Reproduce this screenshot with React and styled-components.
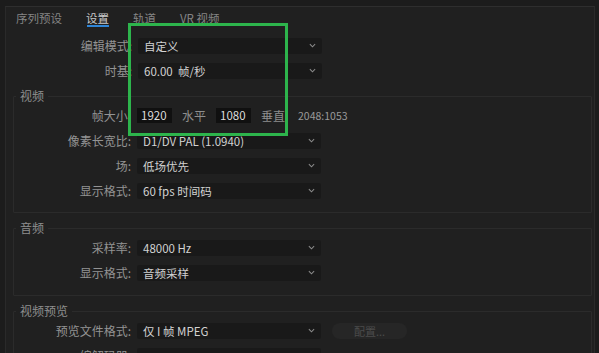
import styled, { createGlobalStyle } from "styled-components";

const Global = createGlobalStyle`
  html, body {
    margin: 0;
    padding: 0;
    background: #1c1c1c;
    overflow: hidden;
  }
  body {
    font-family: "Noto Sans CJK SC", "Noto Sans", sans-serif;
  }
`;

function Chevron() {
  return (
    <S.Chevron viewBox="0 0 8 5">
      <polyline points="1,1 4,4 7,1" fill="none" stroke="#8a8a8a" strokeWidth="1.2" />
    </S.Chevron>
  );
}

function Select({ children }) {
  return (
    <S.Select>
      <span>{children}</span>
      <Chevron />
    </S.Select>
  );
}

function Row({ label, w, children }) {
  return (
    <S.Row>
      <S.Label $w={w}>{label}</S.Label>
      {children}
    </S.Row>
  );
}

function App() {
  return (
    <S.Page>
      <Global />
      <S.Frame>
        <S.Tabs>
          <S.Tab>序列预设</S.Tab>
          <S.Tab $active>设置</S.Tab>
          <S.Tab>轨道</S.Tab>
          <S.Tab>VR 视频</S.Tab>
        </S.Tabs>

        <Row label="编辑模式:" w={126}>
          <Select>自定义</Select>
        </Row>
        <Row label="时基:" w={126}>
          <Select>60.00&nbsp; 帧/秒</Select>
        </Row>

        <S.Section>
          <S.Legend>视频</S.Legend>
          <Row label="帧大小:" w={117}>
            <S.Input>1920</S.Input>
            <S.Unit>水平</S.Unit>
            <S.Input>1080</S.Input>
            <S.Unit>垂直</S.Unit>
            <S.Ratio>2048:1053</S.Ratio>
          </Row>
          <Row label="像素长宽比:" w={117}>
            <Select>D1/DV PAL (1.0940)</Select>
          </Row>
          <Row label="场:" w={117}>
            <Select>低场优先</Select>
          </Row>
          <Row label="显示格式:" w={117}>
            <Select>60 fps 时间码</Select>
          </Row>
        </S.Section>

        <S.Section>
          <S.Legend>音频</S.Legend>
          <Row label="采样率:" w={117}>
            <Select>48000 Hz</Select>
          </Row>
          <Row label="显示格式:" w={117}>
            <Select>音频采样</Select>
          </Row>
        </S.Section>

        <S.Section>
          <S.Legend>视频预览</S.Legend>
          <Row label="预览文件格式:" w={117}>
            <Select>仅 I 帧 MPEG</Select>
            <S.Button>配置...</S.Button>
          </Row>
          <Row label="编解码器:" w={117}>
            <Select></Select>
          </Row>
        </S.Section>
      </S.Frame>
      <S.Highlight />
    </S.Page>
  );
}

export default App;

const S = {
  Page: styled.div`
    position: relative;
    width: 599px;
    height: 353px;
    padding: 6px 4px 0 5px;
    box-sizing: border-box;
    overflow: hidden;
    background: #1c1c1c;
  `,
  Frame: styled.div`
    height: 400px;
    background: #202020;
    border-top: 1px solid #2e2e2e;
    border-left: 1px solid #2a2a2a;
    border-right: 1px solid #2a2a2a;
  `,
  Tabs: styled.div`
    display: flex;
    height: 26px;
    padding-left: 10px;
  `,
  Tab: styled.div`
    position: relative;
    margin-right: 24px;
    font-size: 11.5px;
    line-height: 23px;
    color: ${(p) => (p.$active ? "#c9c9c9" : "#858585")};

    &::after {
      content: "";
      display: ${(p) => (p.$active ? "block" : "none")};
      position: absolute;
      left: 1px;
      right: 0;
      top: 18px;
      height: 2px;
      background: #2f86d8;
    }
  `,
  Row: styled.div`
    display: flex;
    align-items: center;
    height: 25px;
  `,
  Label: styled.div`
    width: ${(p) => p.$w}px;
    flex: none;
    text-align: right;
    padding-right: 6px;
    font-size: 12px;
    color: #939393;
  `,
  Select: styled.div`
    display: flex;
    align-items: center;
    justify-content: space-between;
    width: 184px;
    height: 16px;
    padding: 0 6px 0 6px;
    box-sizing: border-box;
    background: #191919;
    border-radius: 2px;
    font-size: 11.5px;
    color: #d2d2d2;
    white-space: nowrap;
  `,
  Chevron: styled.svg`
    width: 7px;
    height: 5px;
    flex: none;
  `,
  Input: styled.div`
    width: 35px;
    height: 15px;
    box-sizing: border-box;
    padding-left: 4px;
    background: #101010;
    font-size: 11.5px;
    line-height: 15px;
    color: #dcdcdc;
  `,
  Unit: styled.div`
    padding: 0 10px 0 10px;
    font-size: 12px;
    color: #8e8e8e;
  `,
  Ratio: styled.div`
    margin-left: 3px;
    font-size: 10.5px;
    color: #9a9a9a;
  `,
  Section: styled.fieldset`
    margin: 6px 2px 0 7px;
    padding: 0 0 9px 0;
    border: 1px solid #2b2b2b;
    border-radius: 1px;

    & + & {
      margin-top: 8px;
      padding-bottom: 10px;
    }
  `,
  Legend: styled.legend`
    margin-left: 2px;
    padding: 0 4px;
    font-size: 12px;
    line-height: 14px;
    color: #8e8e8e;
  `,
  Button: styled.div`
    margin-left: 11px;
    width: 75px;
    height: 16px;
    border-radius: 8px;
    background: #262626;
    font-size: 11px;
    line-height: 16px;
    text-align: center;
    color: #4c4c4c;
  `,
  Highlight: styled.div`
    position: absolute;
    left: 128px;
    top: 23px;
    width: 160px;
    height: 113px;
    box-sizing: border-box;
    border: 3px solid #2db44c;
    pointer-events: none;
  `,
};
